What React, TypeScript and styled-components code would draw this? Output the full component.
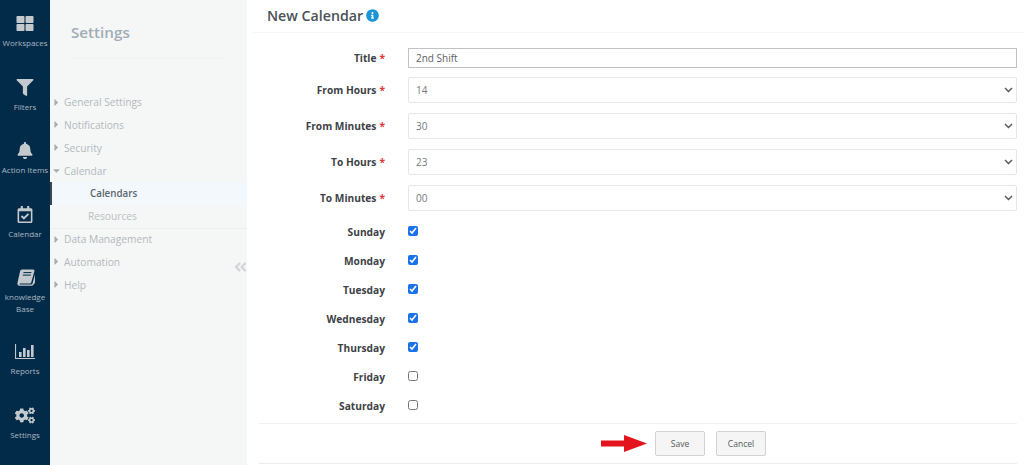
import { FC, ReactNode } from "react";
import styled, { createGlobalStyle } from "styled-components";
import {
  FaThLarge,
  FaFilter,
  FaBell,
  FaRegCalendarCheck,
  FaCogs,
  FaInfoCircle,
  FaAngleDoubleLeft,
  FaCaretRight,
  FaCaretDown,
} from "react-icons/fa";

const chevron =
  "data:image/svg+xml,%3Csvg xmlns='http://www.w3.org/2000/svg' width='9' height='6'%3E%3Cpath d='M1 1l3.5 3.5L8 1' fill='none' stroke='%23555' stroke-width='1.4'/%3E%3C/svg%3E";

const GlobalStyle = createGlobalStyle`
  html, body {
    margin: 0;
    padding: 0;
    background: #fff;
    font-family: "Open Sans", "Liberation Sans", sans-serif;
  }
  * { box-sizing: border-box; }
`;

const Page = styled.div`
  display: flex;
  width: 1024px;
  height: 465px;
  overflow: hidden;
`;

const Rail = styled.nav`
  width: 50px;
  flex: none;
  background: #022b49;
  display: flex;
  flex-direction: column;
  padding-top: 15px;
  overflow: hidden;
`;

const RailItem = styled.div<{ tall?: boolean }>`
  height: ${(props) => (props.tall ? "74px" : "63.5px")};
  flex: none;
  display: flex;
  flex-direction: column;
  align-items: center;
  color: #c3c9cd;
  svg {
    height: 17px;
    width: 20px;
    display: block;
  }
`;

const RailLabel = styled.span`
  margin-top: 5px;
  font-size: 8px;
  line-height: 12px;
  color: #a9b6c0;
  text-align: center;
  white-space: nowrap;
`;

const Sidebar = styled.aside`
  position: relative;
  width: 197px;
  flex: none;
  background: #f5f6f6;
  display: flex;
  flex-direction: column;
`;

const SidebarTitle = styled.h2`
  margin: 21px 20px 0 21px;
  height: 38px;
  font-size: 15.2px;
  line-height: 22px;
  font-weight: 600;
  color: #a0adb6;
  border-bottom: 1px solid #f0f1f1;
`;

const Menu = styled.ul`
  list-style: none;
  margin: 31.6px 0 0;
  padding: 0;
`;

const MenuRow = styled.li`
  height: 22.85px;
  display: flex;
  align-items: center;
  padding-left: 2px;
  font-size: 10.2px;
  color: #b2babf;
  svg {
    width: 9px;
    height: 11px;
    margin-right: 3px;
    color: #a6aeb3;
    flex: none;
  }
`;

const SubRow = styled.li<{ active?: boolean }>`
  height: 22.85px;
  display: flex;
  align-items: center;
  padding-left: ${(props) => (props.active ? "40px" : "38px")};
  font-size: ${(props) => (props.active ? "9.8px" : "10.2px")};
  font-weight: ${(props) => (props.active ? 600 : 400)};
  color: ${(props) => (props.active ? "#5c666d" : "#b8c0c5")};
  background: ${(props) => (props.active ? "#f2f8fc" : "transparent")};
  box-shadow: ${(props) => (props.active ? "inset 2px 0 0 #3c4650" : "none")};
`;

const MenuDivider = styled.li`
  height: 0;
  margin-bottom: -1px;
  border-top: 1px solid #ecedee;
`;

const CollapseHandle = styled.span`
  position: absolute;
  right: 0;
  top: 258px;
  color: #d3d6d8;
  line-height: 0;
  svg {
    width: 13px;
    height: 18px;
  }
`;

const Main = styled.main`
  flex: 1;
  min-width: 0;
  display: flex;
  flex-direction: column;
`;

const Header = styled.header`
  height: 33px;
  margin-left: 6px;
  padding: 0 0 1px 14px;
  display: flex;
  align-items: center;
  gap: 3px;
  border-bottom: 1px solid #f6f6f6;
`;

const Heading = styled.h1`
  margin: 0;
  font-size: 14.2px;
  font-weight: 600;
  color: #4a5157;
`;

const InfoIcon = styled(FaInfoCircle)`
  width: 13px;
  height: 13px;
  color: #1a96d8;
`;

const Form = styled.form`
  display: flex;
  flex-direction: column;
  padding: 10px 7px 0 0;
`;

const FieldRow = styled.div<{ rowHeight: number }>`
  display: grid;
  grid-template-columns: 138px 1fr;
  column-gap: 23px;
  align-items: center;
  height: ${(props) => props.rowHeight}px;
`;

const Label = styled.label`
  text-align: right;
  font-size: 10.2px;
  font-weight: 700;
  color: #3d4246;
  white-space: nowrap;
`;

const Required = styled.span`
  color: #e0343c;
  margin-left: 3px;
`;

const TextInput = styled.input`
  width: 100%;
  height: 20px;
  padding: 0 7px;
  border: 1px solid #c2c2c2;
  font-family: inherit;
  font-size: 10px;
  color: #5c6166;
  background: #fff;
  outline: none;
`;

const Select = styled.select`
  width: 100%;
  height: 26px;
  padding: 0 7px;
  border: 1px solid #e6e6e6;
  border-radius: 2px;
  font-family: inherit;
  font-size: 10px;
  color: #73797e;
  appearance: none;
  background: #fff url("${chevron}") no-repeat right 3px center;
`;

const DayList = styled.div`
  margin-top: 1px;
`;

const Check = styled.input`
  width: 10px;
  height: 10px;
  margin: 0 0 1px;
  accent-color: #1a73e8;
`;

const Footer = styled.footer`
  margin: 3px 7px 0 12px;
  padding-left: 342px;
  height: 41px;
  display: flex;
  align-items: center;
  border-top: 1px solid #f1f1f1;
  border-bottom: 1px solid #ececec;
`;

const SaveArrow = styled.svg`
  margin-right: 8px;
  flex: none;
`;

const Button = styled.button<{ spaced?: boolean }>`
  width: 50px;
  height: 25px;
  margin-left: ${(props) => (props.spaced ? "11px" : "0")};
  border: 1px solid #d2d2d2;
  border-radius: 2px;
  background: #f5f5f5;
  font-family: inherit;
  font-size: 8.5px;
  color: #555b60;
  padding: 0;
`;

const BookIcon: FC = () => (
  <svg viewBox="0 0 20 17" fill="currentColor">
    <path d="M7 0.5H18.2C19.2 0.5 19.7 1.3 19.4 2.2L16.3 13.2C16 14.2 15.4 14.6 14.5 14.6H5.2C4.3 14.6 4.1 15.5 5 15.5H16C16.8 15.5 17.3 15.1 17.6 14.3L20 5.5V13.8L18.4 15.8C18 16.4 17.3 16.8 16.6 16.8H4.6C2.9 16.8 2 15.4 2.5 13.7L5 2.6C5.3 1.4 6 0.5 7 0.5Z" />
    <path d="M8.4 3.6H16.4M7.8 6.1H15.8" stroke="#022b49" strokeWidth="1" fill="none" />
  </svg>
);

const ReportsIcon: FC = () => (
  <svg viewBox="0 0 20 17" fill="currentColor">
    <path d="M0.5 1V15.5H20" fill="none" stroke="currentColor" strokeWidth="1.2" />
    <rect x="4" y="9" width="2.6" height="5" />
    <rect x="8" y="5" width="2.6" height="9" />
    <rect x="12" y="7" width="2.6" height="7" />
    <rect x="16" y="2" width="2.6" height="12" />
  </svg>
);

const TimeField: FC<{ label: string; value: string }> = ({ label, value }) => (
  <FieldRow rowHeight={36}>
    <Label>
      {label}
      <Required>*</Required>
    </Label>
    <Select defaultValue={value}>
      <option>{value}</option>
    </Select>
  </FieldRow>
);

const railItems: { label: ReactNode; icon: ReactNode; tall?: boolean }[] = [
  { label: "Workspaces", icon: <FaThLarge /> },
  { label: "Filters", icon: <FaFilter /> },
  { label: "Action Items", icon: <FaBell /> },
  { label: "Calendar", icon: <FaRegCalendarCheck /> },
  {
    label: (
      <>
        knowledge
        <br />
        Base
      </>
    ),
    icon: <BookIcon />,
    tall: true,
  },
  { label: "Reports", icon: <ReportsIcon /> },
  { label: "Settings", icon: <FaCogs /> },
];

const days = [
  { name: "Sunday", checked: true },
  { name: "Monday", checked: true },
  { name: "Tuesday", checked: true },
  { name: "Wednesday", checked: true },
  { name: "Thursday", checked: true },
  { name: "Friday", checked: false },
  { name: "Saturday", checked: false },
];

const App: FC = () => (
  <Page>
    <GlobalStyle />
    <Rail>
      {railItems.map((item, index) => (
        <RailItem key={index} tall={item.tall}>
          {item.icon}
          <RailLabel>{item.label}</RailLabel>
        </RailItem>
      ))}
    </Rail>
    <Sidebar>
      <SidebarTitle>Settings</SidebarTitle>
      <Menu>
        <MenuRow>
          <FaCaretRight />
          General Settings
        </MenuRow>
        <MenuRow>
          <FaCaretRight />
          Notifications
        </MenuRow>
        <MenuRow>
          <FaCaretRight />
          Security
        </MenuRow>
        <MenuRow>
          <FaCaretDown />
          Calendar
        </MenuRow>
        <SubRow active>Calendars</SubRow>
        <SubRow>Resources</SubRow>
        <MenuDivider />
        <MenuRow>
          <FaCaretRight />
          Data Management
        </MenuRow>
        <MenuRow>
          <FaCaretRight />
          Automation
        </MenuRow>
        <MenuRow>
          <FaCaretRight />
          Help
        </MenuRow>
      </Menu>
      <CollapseHandle>
        <FaAngleDoubleLeft />
      </CollapseHandle>
    </Sidebar>
    <Main>
      <Header>
        <Heading>New Calendar</Heading>
        <InfoIcon />
      </Header>
      <Form>
        <FieldRow rowHeight={29}>
          <Label>
            Title
            <Required>*</Required>
          </Label>
          <TextInput defaultValue="2nd Shift" />
        </FieldRow>
        <TimeField label="From Hours" value="14" />
        <TimeField label="From Minutes" value="30" />
        <TimeField label="To Hours" value="23" />
        <TimeField label="To Minutes" value="00" />
        <DayList>
          {days.map((day) => (
            <FieldRow key={day.name} rowHeight={29}>
              <Label>{day.name}</Label>
              <Check type="checkbox" defaultChecked={day.checked} />
            </FieldRow>
          ))}
        </DayList>
      </Form>
      <Footer>
        <SaveArrow width="46" height="17" viewBox="0 0 46 17">
          <path d="M0 5.5H23V0L46 8.5L23 17V11.5H0Z" fill="#e3141c" />
        </SaveArrow>
        <Button type="button">Save</Button>
        <Button type="button" spaced>
          Cancel
        </Button>
      </Footer>
    </Main>
  </Page>
);

export default App;
